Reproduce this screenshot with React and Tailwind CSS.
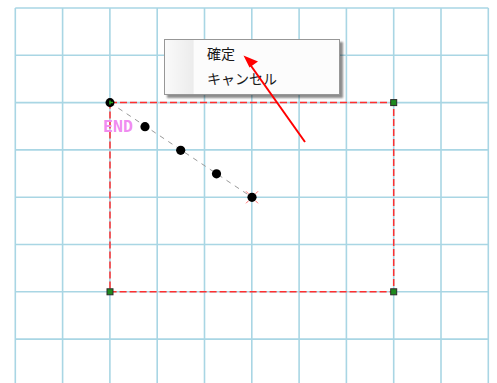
import React from 'react';

const STEP = 47.3;
const X0 = 15.3;
const Y0 = 8;

const vLines = Array.from({ length: 11 }, (_, i) => X0 + STEP * i);
const hLines = Array.from({ length: 9 }, (_, i) => Y0 + STEP * i);

const dots = [
  [145, 126.7],
  [180.7, 150.3],
  [216.5, 173.8],
];

const Canvas = () => (
  <svg className="absolute inset-0" width="497" height="383" viewBox="0 0 497 383">
    {/* grid */}
    {vLines.map((x, i) => (
      <line key={'v' + i} x1={x} y1={Y0} x2={x} y2={383} stroke="#a9d6e4" strokeWidth="1.6" />
    ))}
    {hLines.map((y, i) => (
      <line key={'h' + i} x1={X0} y1={y} x2={488.3} y2={y} stroke="#a9d6e4" strokeWidth="1.6" />
    ))}

    {/* selection rect */}
    <rect
      x="110"
      y="102.6"
      width="283.7"
      height="189.2"
      fill="none"
      stroke="#ff3030"
      strokeWidth="1.5"
      strokeDasharray="7 3"
    />

    {/* guide line */}
    <line x1="110" y1="102.6" x2="252" y2="197.3" stroke="#9a9a9a" strokeWidth="1" strokeDasharray="5 5" />

    {/* corner handles */}
    {[
      [393.7, 102.6],
      [110, 291.8],
      [393.7, 291.8],
    ].map(([x, y], i) => (
      <rect key={i} x={x - 3} y={y - 3} width="6" height="6" fill="#1f8a1f" stroke="#2a2a2a" strokeWidth="1" />
    ))}

    {/* start point */}
    <circle cx="110" cy="102.6" r="4.5" fill="#000" />
    <path d="M110 100.5 V104.5 M110 102.6 H113" stroke="#22aa22" strokeWidth="1.5" />

    {dots.map(([x, y], i) => (
      <circle key={i} cx={x} cy={y} r="4.6" fill="#000" />
    ))}

    {/* end point with red ticks */}
    <circle cx="252" cy="197.3" r="4.6" fill="#000" />
    <path
      d="M246 191.3 l2.5 2.5 M258 191.3 l-2.5 2.5 M246 203.3 l2.5 -2.5 M258 203.3 l-2.5 -2.5"
      stroke="#ff6f6f"
      strokeWidth="1"
    />

    <text
      x="103"
      y="132"
      fill="#f08cf0"
      fontSize="16.5"
      fontWeight="bold"
      fontFamily="'DejaVu Sans Mono', monospace"
      textLength="30"
      lengthAdjust="spacingAndGlyphs"
    >
      END
    </text>
  </svg>
);

const Arrow = () => (
  <svg className="absolute inset-0 pointer-events-none" width="497" height="383" viewBox="0 0 497 383">
    <line x1="305" y1="142" x2="249" y2="63" stroke="#ff0000" strokeWidth="2" />
    <polygon points="243.5,55.5 258,61.5 249.5,67.5" fill="#ff0000" />
  </svg>
);

const ContextMenu = () => (
  <div className="absolute left-[164px] top-[39px] w-[176px] h-[56px] border border-[#979797] bg-[#fcfcfc] shadow-[3px_3px_2px_rgba(0,0,0,0.45)] flex">
    <div className="w-[29px] bg-gradient-to-r from-[#fafafa] to-[#ececec] border-r border-[#f2f2f2]" />
    <div className="flex flex-col pl-[13px] text-[14px] leading-none text-[#1a1a1a] font-['Noto_Sans_CJK_JP',sans-serif]">
      <div className="h-[25px] flex items-center">確定</div>
      <div className="h-[25px] flex items-center">キャンセル</div>
    </div>
  </div>
);

export default function App() {
  return (
    <div className="relative w-[497px] h-[383px] bg-white overflow-hidden">
      <Canvas />
      <ContextMenu />
      <Arrow />
    </div>
  );
}
